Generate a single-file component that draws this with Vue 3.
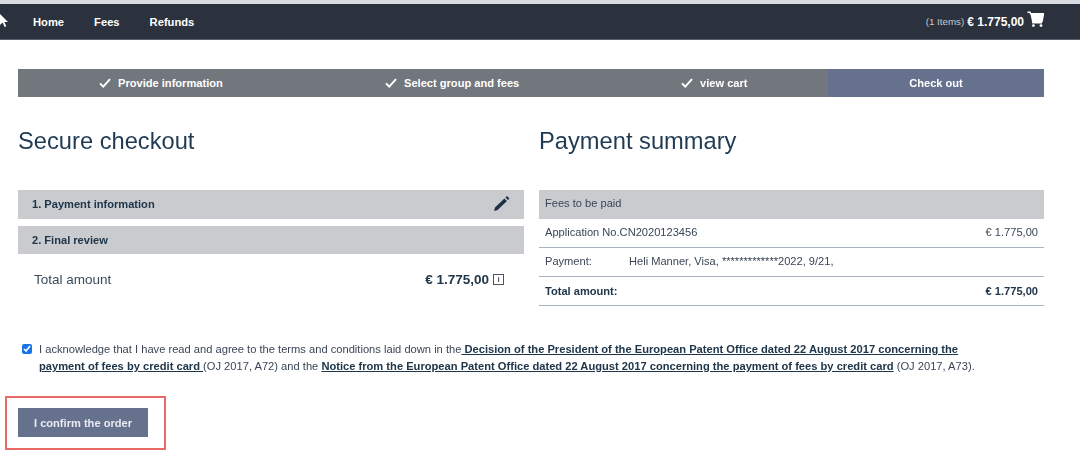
<script setup>
const steps = [
  { label: 'Provide information', done: true, cls: 's1' },
  { label: 'Select group and fees', done: true, cls: 's2' },
  { label: 'view cart', done: true, cls: 's3' },
  { label: 'Check out', done: false, cls: 's4' }
]
</script>

<template>
  <div class="page">
    <div class="strip"></div>
    <header class="nav">
      <svg class="cursor" width="9" height="14" viewBox="0 0 9 14"><path d="M0 0v11l2.6-2.4L4.6 13l1.7-.8-2-4.2H8z" fill="#fff"/></svg>
      <nav class="links">
        <a>Home</a><a>Fees</a><a>Refunds</a>
      </nav>
      <div class="cart">
        <span class="items">(1 Items)</span>
        <strong class="sum">€ 1.775,00</strong>
        <svg class="cart-ico" width="17" height="17" viewBox="0 0 17 17">
          <path d="M0.5 1.2H3l0.6 1.6H16.5l-1.4 7.4H5.6l0.3 1.6h9.2" fill="none" stroke="#fff" stroke-width="1.4"/>
          <path d="M3.3 2.4H16.5L15.1 10.2H5z" fill="#fff"/>
          <circle cx="6.4" cy="14.6" r="1.4" fill="#fff"/><circle cx="14" cy="14.6" r="1.4" fill="#fff"/>
        </svg>
      </div>
    </header>

    <main class="main">
      <div class="steps">
        <div v-for="s in steps" :key="s.label" class="step" :class="[s.cls, { active: !s.done }]">
          <svg v-if="s.done" class="check" width="12" height="10" viewBox="0 0 12 10"><path d="M1 5.4l3.3 3.2L11 1.2" fill="none" stroke="#fff" stroke-width="2"/></svg>
          <span>{{ s.label }}</span>
        </div>
      </div>

      <div class="cols">
        <section class="col">
          <h1>Secure checkout</h1>
          <div class="bar first">
            <span>1. Payment information</span>
            <svg width="17" height="17" viewBox="0 0 17 17"><path d="M1 16l1-3.6L11.4 3.6 14 6.1 4.6 15zM12.5 2.5L14 1l2.5 2.5L15 5z" fill="#1f3044"/></svg>
          </div>
          <div class="bar second"><span>2. Final review</span></div>
          <div class="total">
            <span class="total-label">Total amount</span>
            <span class="total-right">
              <strong>€ 1.775,00</strong>
              <span class="info">i</span>
            </span>
          </div>
        </section>

        <section class="col">
          <h1>Payment summary</h1>
          <div class="tbl">
            <div class="thead">Fees to be paid</div>
            <div class="row"><span>Application No.CN2020123456</span><span>€ 1.775,00</span></div>
            <div class="row pay"><span class="pl">Payment:</span><span>Heli Manner, Visa, *************2022, 9/21,</span></div>
            <div class="row tot"><strong>Total amount:</strong><strong>€ 1.775,00</strong></div>
          </div>
        </section>
      </div>

      <label class="terms">
        <input type="checkbox" checked />
        <span>I acknowledge that I have read and agree to the terms and conditions laid down in the<a> Decision of the President of the European Patent Office dated 22 August 2017 concerning the payment of fees by credit card </a>(OJ 2017, A72) and the <a>Notice from the European Patent Office dated 22 August 2017 concerning the payment of fees by credit card</a> (OJ 2017, A73).</span>
      </label>

      <div class="confirm-wrap">
        <button class="confirm">I confirm the order</button>
      </div>
    </main>
  </div>
</template>

<style>
html, body { margin: 0; background: #fff; overflow: hidden; }
</style>

<style scoped>
.page { width: 1080px; height: 451px; font-family: "Liberation Sans", Arial, sans-serif; color: #1f3044; overflow: hidden; filter: blur(0.3px); }
.strip { height: 4px; background: #d8dbe0; }
.nav { background: #2b323e; display: flex; align-items: center; color: #fff; position: relative; border-bottom: 1px solid #5a606a; box-sizing: border-box; height: 36px; }
.cursor { position: absolute; left: 0; top: 10px; }
.links { display: flex; gap: 30px; margin-left: 33px; font-size: 11.2px; font-weight: 700; }
.cart { margin-left: auto; margin-right: 36px; display: flex; align-items: center; }
.items { font-size: 9.8px; color: #c5c9d0; margin-right: 3px; }
.sum { font-size: 12px; margin-right: 3px; }
.cart-ico { margin-top: -5px; }
.main { padding: 29px 36px 0 18px; }
.steps { display: grid; grid-template-columns: 304px 304px 202px 216px; height: 28px; background: #72767d; color: #fff; font-size: 11.1px; font-weight: 700; }
.step { display: flex; align-items: center; box-sizing: border-box; gap: 7px; }
.s1 { padding-left: 81px; }
.s2 { padding-left: 63px; }
.s3 { padding-left: 55px; }
.s4 { background: #66718e; justify-content: center; }
.cols { display: grid; grid-template-columns: 506px 505px; column-gap: 15px; }
h1 { margin: 29px 0 0; font-size: 23.7px; font-weight: 400; line-height: 30px; color: #1f3a52; }
.bar { background: #c9cbcf; display: flex; align-items: center; justify-content: space-between; padding: 0 14px; box-sizing: border-box; font-size: 11.1px; font-weight: 700; color: #20364a; }
.first { height: 29px; margin-top: 34px; padding-bottom: 2px; }
.second { height: 28px; margin-top: 7px; }
.total { display: flex; justify-content: space-between; align-items: center; height: 50px; padding: 0 20px 0 16px; font-size: 13.5px; }
.total-label { color: #3a4a5a; }
.total-right { display: flex; align-items: center; gap: 4px; font-size: 13.5px; color: #20364a; }
.info { width: 9px; height: 9px; border: 1px solid #4a5561; color: #4a5561; font-size: 8px; font-weight: 700; line-height: 9px; text-align: center; }
.tbl { margin-top: 34px; font-size: 11.1px; color: #3a4656; }
.thead { background: #c9cbcf; height: 29px; line-height: 26px; padding: 0 6px; }
.row { display: flex; justify-content: space-between; align-items: center; height: 29px; padding: 0 6px 2px; border-bottom: 1px solid #a9b3bd; box-sizing: border-box; }
.row.pay { justify-content: flex-start; padding-left: 6px; }
.pl { width: 84px; }
.tot { color: #20364a; padding-bottom: 0; }
.terms { display: flex; align-items: flex-start; margin: 35px 0 0 4px; font-size: 11.15px; line-height: 17px; color: #3a4656; width: 980px; }
.terms input { width: 10px; height: 10px; margin: 3px 7px 0 0; accent-color: #1a73e8; flex: none; }
.terms a { font-weight: 700; color: #20364a; text-decoration: underline; }
.confirm-wrap { width: 130px; margin: 21px 0 0 -13px; border: 2px solid #ea6a6a; padding: 10px 16px 11px 11px; display: flex; }
.confirm { width: 130px; height: 29px; background: #66718e; color: #e9ebf0; border: 0; padding: 0; font: 700 11.1px "Liberation Sans", Arial, sans-serif; }
</style>
